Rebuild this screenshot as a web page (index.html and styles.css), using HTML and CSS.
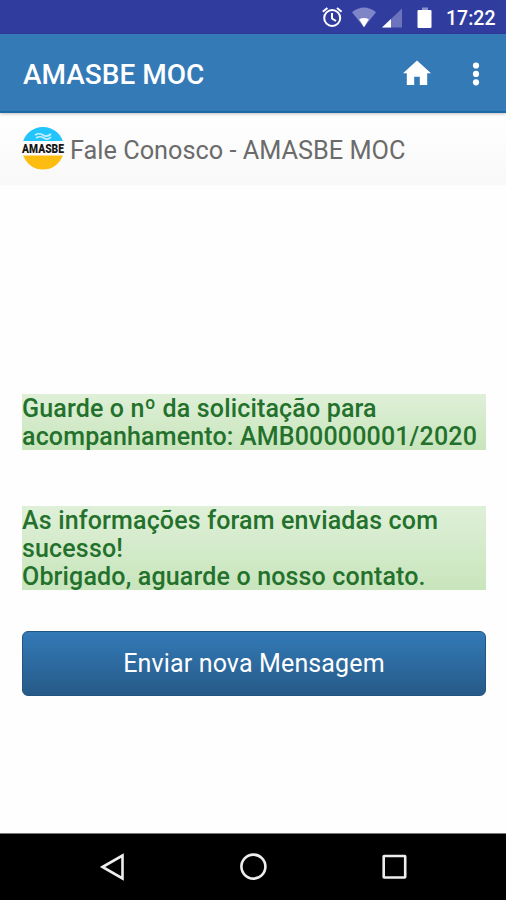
FILE: index.html
```html
<!DOCTYPE html>
<html lang="pt-BR">
<head>
<meta charset="utf-8">
<meta name="viewport" content="width=device-width">
<title>AMASBE MOC</title>
<link rel="stylesheet" href="styles.css">
</head>
<body>
<div class="status">
  <svg class="status-icons" width="116" height="34" viewBox="0 0 116 34">
    <g fill="none" stroke="#fff" stroke-width="2">
      <circle cx="10.200" cy="18" r="8"/>
      <path d="M10 13v5.500l4 2.500M.8 11.800l4.600-3.900M15 7.900l4.600 3.900"/>
    </g>
    <path d="M30 12.200Q42 3 54 12.200L42 27.300z" fill="#7f86c8"/>
    <path d="M37.200 19.300q4.800-2.500 9.600 0L42 27.300z" fill="#fff"/>
    <path d="M60 27.500L80 8.500v19z" fill="#6c74be"/>
    <path d="M60 27.500l9-8.500v8.500z" fill="#fff"/>
    <path d="M100 7.500h6V10h-6z" fill="#8d91cc"/>
    <rect x="95.500" y="10" width="14" height="18" rx="1" fill="#fff"/>
  </svg>
  <span class="clock">17:22</span>
</div>
<header class="appbar">
  <h1 class="app-title">AMASBE MOC</h1>
  <svg class="home" width="28" height="26" viewBox="0 0 28 26" fill="#fff"><path d="M14 .5L28 13.200h-3.800V25h-7.400v-8.200h-5.600V25H3.800V13.200H0z"/></svg>
  <svg class="more" width="8" height="24" viewBox="0 0 8 24" fill="#fff"><circle cx="4" cy="3.500" r="3.100"/><circle cx="4" cy="11.900" r="3.100"/><circle cx="4" cy="20.300" r="3.100"/></svg>
</header>
<div class="subheader">
  <svg class="logo" width="48" height="44" viewBox="-2 0 48 44">
    <path d="M2.200 14a21 21 0 0 1 39.600 0z" fill="#21c5fb"/>
    <path d="M2.200 28.500a21 21 0 0 0 39.600 0z" fill="#fdbd10"/>
    <path d="M14 8q4-2.500 8 0t8-1M15 11q4-2.500 8 0t7-1" fill="none" stroke="#c5efff" stroke-width="1.700"/>
    <g transform="translate(22 26) scale(.79 1)"><text class="logo-text" text-anchor="middle">AMASBE</text></g>
  </svg>
  <span class="page-title">Fale Conosco - AMASBE MOC</span>
</div>
<main class="content">
  <p class="message protocol">Guarde o nº da solicitação para<br>acompanhamento: AMB00000001/2020</p>
  <p class="message">As informações foram enviadas com<br>sucesso!<br>Obrigado, aguarde o nosso contato.</p>
  <button class="send" type="button">Enviar nova Mensagem</button>
</main>
<nav class="navbar">
  <svg width="28" height="28" viewBox="0 0 28 28"><path d="M4.500 14L24.500 2.500v23z"/></svg>
  <svg width="28" height="28" viewBox="0 0 28 28"><circle cx="14.400" cy="13.600" r="12"/></svg>
  <svg width="28" height="28" viewBox="0 0 28 28"><rect x="3.700" y="3" width="21.500" height="21.500" rx=".5"/></svg>
</nav>
</body>
</html>
```
FILE: styles.css
```css
* { box-sizing: border-box; }
body {
  margin: 0;
  height: 900px;
  display: flex;
  flex-direction: column;
  background: #fefefe;
  font-family: Roboto, "Liberation Sans", sans-serif;
  overflow: hidden;
}
.status {
  height: 34px;
  flex: none;
  display: flex;
  justify-content: flex-end;
  align-items: center;
  padding-right: 11px;
  background: #303d9f;
  color: #fff;
}
.status-icons { margin-right: 8px; }
.clock {
  width: 49px;
  font-size: 19.5px;
  font-weight: 500;
  line-height: 34px;
  white-space: nowrap;
  padding-top: 3px;
}
.appbar {
  height: 79px;
  flex: none;
  display: flex;
  align-items: center;
  padding: 0 26px 0 23px;
  background: #337ab7;
  border-bottom: 2px solid #1b6ba8;
  box-shadow: 0 1px 3px rgba(60, 30, 30, .3);
  z-index: 1;
}
.app-title {
  margin: 4px auto 0 0;
  font-size: 28px;
  font-weight: 500;
  color: #fff;
  white-space: nowrap;
}
.home { margin-right: 41px; }
.more { margin-top: 2px; }
.subheader {
  height: 72px;
  flex: none;
  display: flex;
  align-items: center;
  padding-left: 19px;
  background: linear-gradient(#fff, #f8f8f8);
}
.logo { margin-right: 3px; }
.logo-text { font-size: 13px; font-weight: 900; fill: #171717; }
.page-title {
  font-size: 25.3px;
  margin-top: 2px;
  color: #6b6b6b;
  white-space: nowrap;
}
.content {
  flex: 1;
  padding: 209px 20px 0 22px;
}
.message {
  height: 84px;
  margin: 0 0 41px;
  padding-top: 1px;
  font-size: 25px;
  letter-spacing: .16px;
  font-weight: 500;
  line-height: 28px;
  color: #23712c;
  background: linear-gradient(#dff0d8, #c8e5bc);
  white-space: nowrap;
}
.protocol {
  height: 56px;
  margin-bottom: 56px;
}
.send {
  display: block;
  width: 100%;
  height: 65px;
  padding: 0;
  border: 1px solid #245580;
  border-radius: 6px;
  background: linear-gradient(#337ab7, #265a88);
  color: #fff;
  font: 400 25px/63px Roboto, "Liberation Sans", sans-serif;
  letter-spacing: .14px;
}
.navbar {
  height: 67px;
  flex: none;
  display: flex;
  justify-content: center;
  align-items: center;
  gap: 113px;
  background: #000;
  border-top: 1px solid #777;
}
.navbar svg { fill: none; stroke: #eee; stroke-width: 2.600; }
```
